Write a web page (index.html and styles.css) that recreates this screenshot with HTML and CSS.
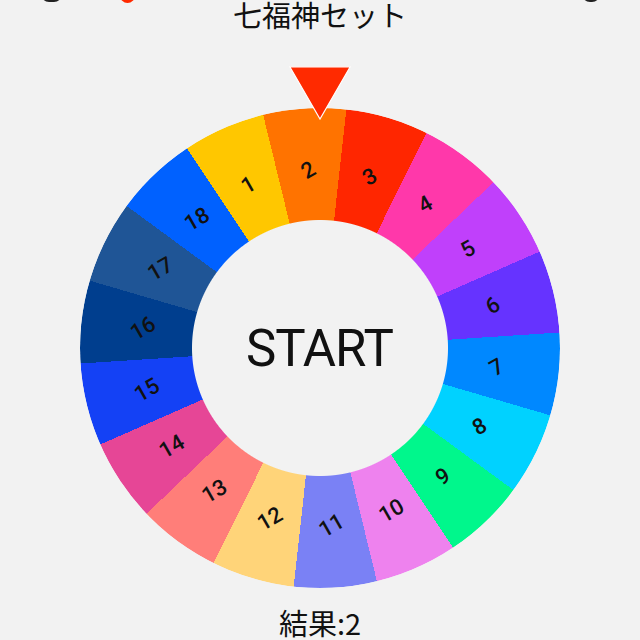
FILE: index.html
```html
<!DOCTYPE html>
<html lang="ja">
<head>
<meta charset="utf-8">
<title>七福神セット</title>
<link rel="stylesheet" href="styles.css">
</head>
<body>
<header class="nav">
  <div class="nav-left">
    <span class="ic ic-dark"></span>
    <span class="ic ic-red"></span>
  </div>
  <span class="ic ic-dark ic-right"></span>
</header>
<h1 class="title">七福神セット</h1>
<main class="stage">
  <div class="wheel">
    <div class="ring"></div>
    <span class="label" style="--a:-23.7deg">1</span>
    <span class="label" style="--a:-3.7deg">2</span>
    <span class="label" style="--a:16.3deg">3</span>
    <span class="label" style="--a:36.3deg">4</span>
    <span class="label" style="--a:56.3deg">5</span>
    <span class="label" style="--a:76.3deg">6</span>
    <span class="label" style="--a:96.3deg">7</span>
    <span class="label" style="--a:116.3deg">8</span>
    <span class="label" style="--a:136.3deg">9</span>
    <span class="label" style="--a:156.3deg">10</span>
    <span class="label" style="--a:176.3deg">11</span>
    <span class="label" style="--a:196.3deg">12</span>
    <span class="label" style="--a:216.3deg">13</span>
    <span class="label" style="--a:236.3deg">14</span>
    <span class="label" style="--a:256.3deg">15</span>
    <span class="label" style="--a:276.3deg">16</span>
    <span class="label" style="--a:296.3deg">17</span>
    <span class="label" style="--a:316.3deg">18</span>
    <div class="start">START</div>
    <svg class="pointer" viewBox="0 0 62 54" width="62" height="54" aria-hidden="true">
      <polygon points="0.8,0.8 61.2,0.8 31,53" fill="#ff2a00" stroke="#ffffff" stroke-width="1.2" stroke-linejoin="miter"/>
    </svg>
  </div>
</main>
<p class="result">結果:2</p>
</body>
</html>
```

FILE: styles.css
```css
html, body {
  margin: 0;
  padding: 0;
  background: #f2f2f2;
}

body {
  width: 640px;
  height: 640px;
  overflow: hidden;
  font-family: "Noto Sans CJK JP", "Noto Sans", sans-serif;
  color: #111111;
}

.nav {
  display: flex;
  justify-content: space-between;
  align-items: flex-start;
  height: 0;
  padding: 0 40px 0 41px;
}

.nav-left {
  display: flex;
  gap: 58px;
}

.ic {
  display: block;
  height: 20px;
  margin-top: -18px;
  border-radius: 0 0 8px 8px;
}

.ic-dark {
  width: 21px;
  background: #222222;
}

.ic-red {
  width: 15px;
  background: #ff2a00;
  margin-top: -17px;
}

.ic-right {
  width: 18px;
}

.title {
  margin: 0;
  font-size: 29px;
  line-height: 28px;
  font-weight: 400;
  text-align: center;
  letter-spacing: 0;
}

.stage {
  display: flex;
  justify-content: center;
  padding-top: 80px;
}

.wheel {
  position: relative;
  width: 480px;
  height: 480px;
  margin-left: -1px;
}

.ring {
  position: absolute;
  inset: 0;
  border-radius: 50%;
  background: conic-gradient(from -33.7deg,
    #ffc700 0deg 20deg,
    #ff7300 20deg 40deg,
    #ff2600 40deg 60deg,
    #ff38aa 60deg 80deg,
    #c040fb 80deg 100deg,
    #6633ff 100deg 120deg,
    #0088ff 120deg 140deg,
    #00d2ff 140deg 160deg,
    #00f78c 160deg 180deg,
    #ee82ee 180deg 200deg,
    #7a81f5 200deg 220deg,
    #ffd479 220deg 240deg,
    #ff7e79 240deg 260deg,
    #e64696 260deg 280deg,
    #1441f5 280deg 300deg,
    #003e8e 300deg 320deg,
    #1f5596 320deg 340deg,
    #0061ff 340deg 360deg);
  -webkit-mask: radial-gradient(circle at center, transparent 127.5px, #000 128.5px);
  mask: radial-gradient(circle at center, transparent 127.5px, #000 128.5px);
}

.label {
  position: absolute;
  left: 50%;
  top: 50%;
  width: 40px;
  height: 26px;
  margin: -13px 0 0 -20px;
  text-align: center;
  line-height: 26px;
  font-family: Roboto, "Liberation Sans", Arial, sans-serif;
  font-weight: 500;
  font-size: 22px;
  color: #111111;
  transform: rotate(var(--a)) translateY(-178px) rotate(calc(-1 * var(--a) - 30deg));
}

.start {
  position: absolute;
  left: 50%;
  top: 50%;
  transform: translate(-50%, -50%);
  font-family: Roboto, "Liberation Sans", Arial, sans-serif;
  font-size: 51px;
  letter-spacing: -1px;
  line-height: 1;
  color: #111111;
  white-space: nowrap;
}

.pointer {
  position: absolute;
  top: -42px;
  left: 209px;
  display: block;
}

.result {
  margin: 20px 0 0;
  font-size: 29px;
  line-height: 29px;
  text-align: center;
}
```
